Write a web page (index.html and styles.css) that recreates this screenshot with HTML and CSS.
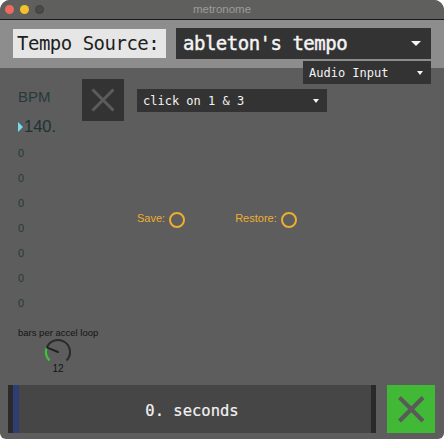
FILE: index.html
```html
<!DOCTYPE html>
<html>
<head>
<meta charset="utf-8">
<link rel="stylesheet" href="styles.css">
</head>
<body>
<div class="window">
  <div class="titlebar">
    <div class="lights">
      <span class="light red"></span>
      <span class="light yellow"></span>
      <span class="light gray"></span>
    </div>
    <div class="title">metronome</div>
    <div></div>
  </div>
  <div class="band">
    <div class="label">Tempo Source:</div>
    <div class="menu big">
      <span>ableton's tempo</span>
      <span class="arrow arrow-big"></span>
    </div>
  </div>
  <div class="content">
    <div class="menu small audio">
      <span>Audio Input</span>
      <span class="arrow"></span>
    </div>
    <div class="main">
      <div class="leftcol">
        <div class="bpm">BPM</div>
        <div class="tempo"><span class="tri"></span><span>140.</span></div>
        <div class="zero">0</div>
        <div class="zero">0</div>
        <div class="zero">0</div>
        <div class="zero">0</div>
        <div class="zero">0</div>
        <div class="zero">0</div>
        <div class="zero">0</div>
        <div class="bars">bars per accel loop</div>
        <svg class="knob" width="28" height="28" viewBox="0 0 28 28">
          <path d="M2.88 9.5 A12 12 0 1 1 22.485 22.485" fill="none" stroke="#2a2a2a" stroke-width="2"/>
          <path d="M5.515 22.485 A12 12 0 0 1 2.88 9.5" fill="none" stroke="#3cc43c" stroke-width="2"/>
          <line x1="14" y1="14" x2="3.2" y2="9.6" stroke="#222" stroke-width="2" stroke-linecap="round"/>
        </svg>
        <div class="knobval">12</div>
      </div>
      <div class="xbtn">
        <svg width="42" height="42" viewBox="0 0 42 42">
          <line x1="10.5" y1="10.5" x2="31.5" y2="31.5" stroke="#5c5c5c" stroke-width="3"/>
          <line x1="31.5" y1="10.5" x2="10.5" y2="31.5" stroke="#5c5c5c" stroke-width="3"/>
        </svg>
      </div>
      <div class="rightcol">
        <div class="menu small click">
          <span>click on 1 &amp; 3</span>
          <span class="arrow"></span>
        </div>
        <div class="saverow">
          <span class="otext">Save:</span>
          <span class="ring"></span>
          <span class="otext restore">Restore:</span>
          <span class="ring"></span>
        </div>
      </div>
    </div>
    <div class="bottom">
      <div class="timebar">0. seconds</div>
      <div class="gbtn">
        <svg width="48" height="48" viewBox="0 0 48 48">
          <line x1="12.5" y1="12.5" x2="36" y2="36" stroke="#5a5a5a" stroke-width="4"/>
          <line x1="36" y1="12.5" x2="12.5" y2="36" stroke="#5a5a5a" stroke-width="4"/>
        </svg>
      </div>
    </div>
  </div>
</div>
</body>
</html>
```

FILE: styles.css
```css
html, body {
  margin: 0;
  padding: 0;
  background: #ffffff;
}

.window {
  width: 444px;
  height: 439px;
  border-radius: 10px 10px 6px 6px;
  overflow: hidden;
  background: #5d5d5d;
  display: flex;
  flex-direction: column;
  position: relative;
}

.titlebar {
  height: 19px;
  border-bottom: 1px solid #1a1a1a;
  background: #5f5f5e;
  display: grid;
  grid-template-columns: 1fr auto 1fr;
  align-items: center;
}

.lights {
  display: flex;
  gap: 6px;
  padding-left: 5px;
}

.light {
  width: 9px;
  height: 9px;
  border-radius: 50%;
  box-sizing: border-box;
}

.red { background: #ee6a5f; }
.yellow { background: #f4c12a; }
.gray { background: #4a4a4a; border: 1px solid #404040; }

.title {
  font-family: "Liberation Sans", Arial, sans-serif;
  font-size: 11.5px;
  color: #9c9c9c;
  line-height: 19px;
}

.band {
  height: 48px;
  box-sizing: border-box;
  background: #8d8d8d;
  display: flex;
  align-items: flex-start;
  padding: 8px 13px 0 13px;
  gap: 10px;
}

.label {
  margin-top: 1px;
  width: 153px;
  height: 29px;
  box-sizing: border-box;
  background: #e6e6e6;
  color: #1e1e1e;
  font-family: "DejaVu Sans Mono", monospace;
  font-size: 19px;
  letter-spacing: -0.5px;
  line-height: 29px;
  padding-left: 4px;
  white-space: nowrap;
}

.menu {
  background: #333333;
  color: #f4f4f4;
  font-family: "DejaVu Sans Mono", monospace;
  display: flex;
  align-items: center;
  justify-content: space-between;
  box-sizing: border-box;
  white-space: nowrap;
}

.menu.big {
  width: 255px;
  height: 31px;
  font-size: 19px;
  font-weight: normal;
  -webkit-text-stroke: 0.45px #f4f4f4;
  letter-spacing: -0.5px;
  line-height: 31px;
  padding: 0 10px 0 7px;
}

.menu.small {
  font-size: 12px;
  height: 23px;
}

.arrow {
  width: 0;
  height: 0;
  border-left: 3.5px solid transparent;
  border-right: 3.5px solid transparent;
  border-top: 4px solid #f4f4f4;
}

.arrow-big {
  border-left-width: 5.5px;
  border-right-width: 5.5px;
  border-top-width: 5px;
}

.content {
  flex: 1;
  display: flex;
  flex-direction: column;
  position: relative;
}

.audio {
  position: absolute;
  top: -7px;
  right: 13px;
  width: 128px;
  line-height: 20px;
  padding: 0 8px 0 6px;
}

.main {
  flex: 1;
  display: flex;
  align-items: flex-start;
  padding-left: 18px;
}

.leftcol {
  width: 64px;
  padding-top: 20px;
  display: flex;
  flex-direction: column;
  font-family: "Liberation Sans", Arial, sans-serif;
  color: #263a3a;
}

.bpm {
  font-size: 15px;
  line-height: 17px;
}

.tempo {
  margin-top: 12px;
  display: flex;
  align-items: center;
  font-size: 16.5px;
  line-height: 18px;
  color: #1f3333;
}

.tri {
  width: 0;
  height: 0;
  border-top: 5.5px solid transparent;
  border-bottom: 5.5px solid transparent;
  border-left: 5.5px solid #74dcec;
  margin-right: 1px;
  margin-top: 1px;
}

.zero {
  font-size: 11px;
  line-height: 25px;
}

.tempo + .zero {
  margin-top: 6px;
}

.bars {
  margin-top: 11px;
  font-size: 9.5px;
  line-height: 11px;
  color: #141414;
  white-space: nowrap;
}

.knob {
  display: block;
  margin-left: 26px;
}

.knobval {
  margin-top: -3px;
  margin-left: 26px;
  width: 28px;
  text-align: center;
  font-size: 10px;
  line-height: 11px;
  color: #141414;
}

.xbtn {
  margin-top: 11px;
  width: 42px;
  height: 42px;
  background: #333333;
}

.xbtn svg, .gbtn svg {
  display: block;
}

.rightcol {
  margin-left: 13px;
  display: flex;
  flex-direction: column;
}

.click {
  margin-top: 21px;
  width: 190px;
  line-height: 22px;
  padding: 1px 8px 0 6px;
}

.saverow {
  margin-top: 100px;
  display: flex;
  align-items: flex-start;
  font-family: "Liberation Sans", Arial, sans-serif;
  font-size: 11px;
  color: #efad30;
}

.otext {
  line-height: 12px;
}

.ring {
  width: 16px;
  height: 16px;
  box-sizing: border-box;
  border: 2px solid #efad30;
  border-radius: 50%;
  margin-left: 4px;
}

.restore {
  margin-left: 50px;
}

.bottom {
  height: 48px;
  margin-bottom: 6px;
  display: flex;
  gap: 11px;
  padding: 0 9px 0 8px;
}

.timebar {
  flex: 1;
  background: linear-gradient(to right, #2a2a2a 0 5px, #2f3e70 5px 11px, #464646 11px calc(100% - 5px), #2a2a2a calc(100% - 5px));
  color: #f2f2f2;
  font-family: "DejaVu Sans Mono", monospace;
  font-size: 15.5px;
  -webkit-text-stroke: 0.2px #f2f2f2;
  line-height: 44px;
  padding-top: 4px;
  box-sizing: border-box;
  text-align: center;
}

.gbtn {
  width: 48px;
  height: 48px;
  background: #41b836;
}
```
